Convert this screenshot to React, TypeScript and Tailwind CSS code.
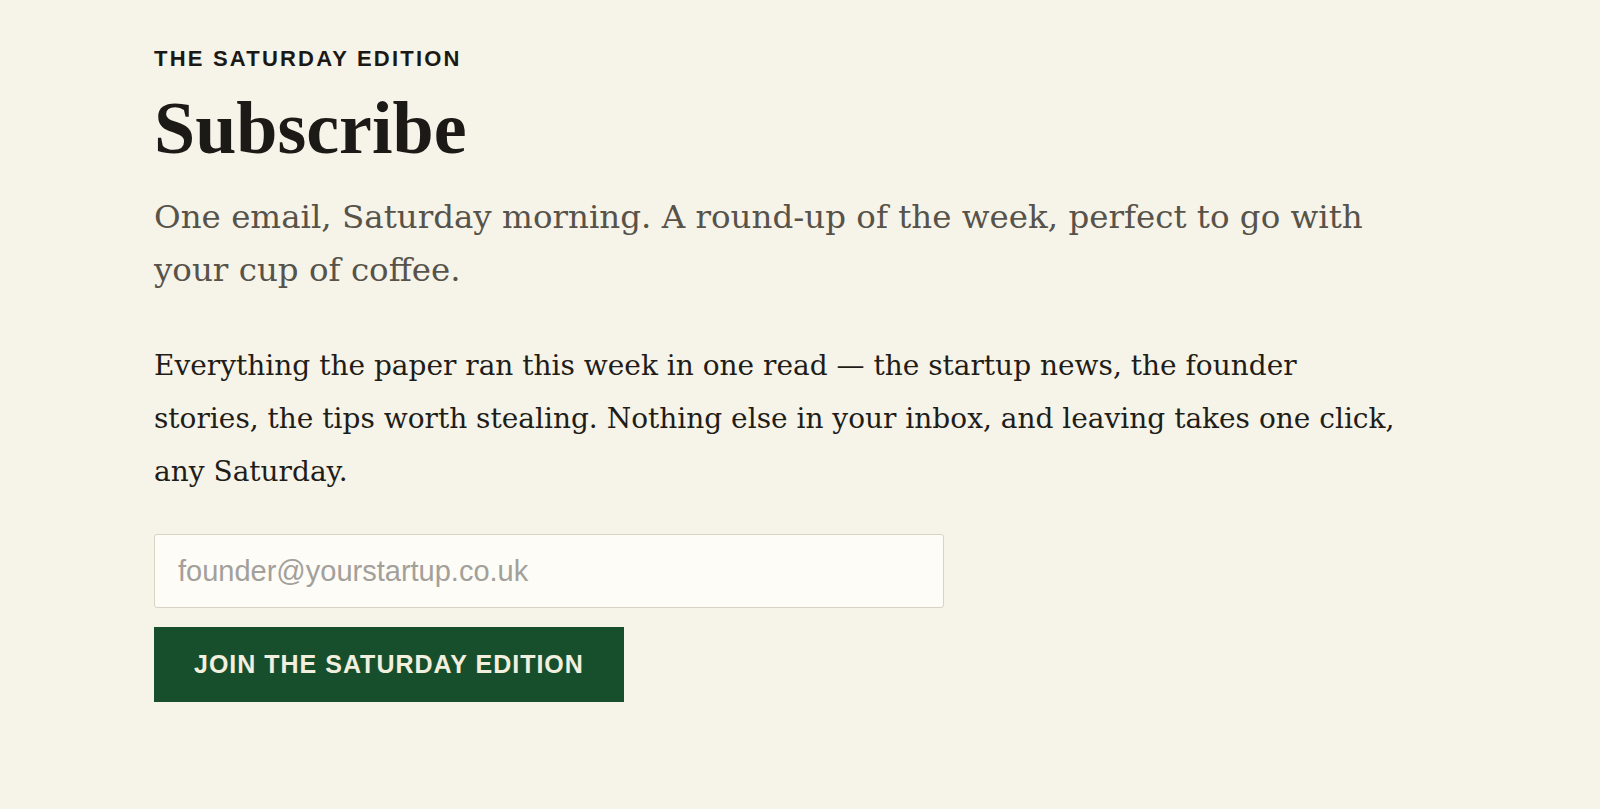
export default function App() {
  return (
    <div className="min-h-screen w-full bg-[#f6f3e9]">
      <section className="mx-auto max-w-[1292px] pt-[47px] pb-24">
        <p className="font-['Liberation_Sans',Arial,sans-serif] text-[22px] leading-[24px] font-bold uppercase tracking-[0.1em] text-[#1a1915]">
          The Saturday Edition
        </p>
        <h1 className="mt-[17px] font-['Liberation_Serif','Times_New_Roman',serif] text-[74px] leading-[80px] font-bold text-[#1b1a16]">
          Subscribe
        </h1>
        <p className="mt-[23px] max-w-[1252px] font-['DejaVu_Serif',Georgia,serif] text-[32.5px] leading-[53px] text-[#57534a]">
          One email, Saturday morning. A round-up of the week, perfect to go with your cup of coffee.
        </p>
        <p className="mt-[42px] max-w-[1252px] font-['DejaVu_Serif',Georgia,serif] text-[28px] leading-[53px] text-[#1f1d18]">
          Everything the paper ran this week in one read — the startup news, the founder stories, the tips worth
          stealing. Nothing else in your inbox, and leaving takes one click, any Saturday.
        </p>
        <form className="mt-[36px] flex flex-col items-start gap-[19px]" onSubmit={(e) => e.preventDefault()}>
          <input
            type="email"
            placeholder="founder@yourstartup.co.uk"
            className="h-[74px] w-[790px] rounded-[3px] border border-[#d8d3c3] bg-[#fdfcf7] px-[23px] font-['Liberation_Sans',Arial,sans-serif] text-[29px] text-[#1f1d18] outline-none placeholder:text-[#a3a09a]"
          />
          <button
            type="submit"
            className="flex h-[75px] items-center bg-[#174f2d] px-10 font-['Liberation_Sans',Arial,sans-serif] text-[25px] font-bold uppercase tracking-[0.04em] text-[#f3efdf]"
          >
            Join the Saturday Edition
          </button>
        </form>
      </section>
    </div>
  );
}
